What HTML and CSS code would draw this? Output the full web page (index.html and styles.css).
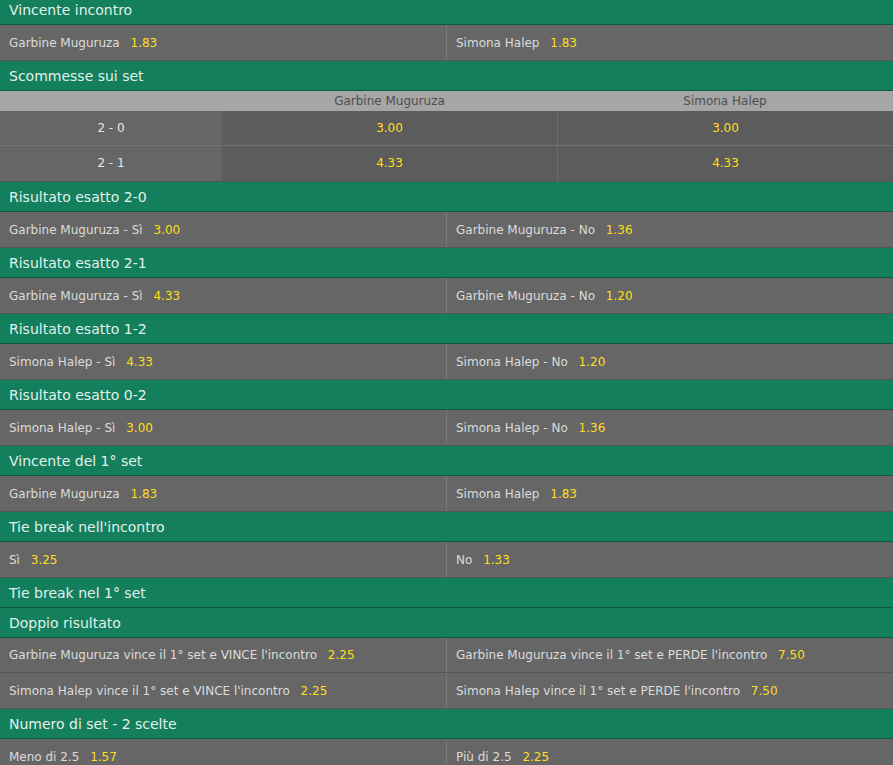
FILE: index.html
```html
<!DOCTYPE html>
<html lang="it">
<head>
<meta charset="utf-8">
<title>Scommesse</title>
<link rel="stylesheet" href="styles.css">
</head>
<body>
<div class="markets">
  <div class="mhead">Vincente incontro</div>
  <div class="row2">
    <div class="cell">Garbine Muguruza <span class="odd">1.83</span></div>
    <div class="cell">Simona Halep <span class="odd">1.83</span></div>
  </div>

  <div class="mhead">Scommesse sui set</div>
  <div class="settable">
    <div class="colhead"></div>
    <div class="colhead">Garbine Muguruza</div>
    <div class="colhead">Simona Halep</div>
    <div class="score">2 - 0</div>
    <div class="setodd"><span class="odd">3.00</span></div>
    <div class="setodd last"><span class="odd">3.00</span></div>
    <div class="score">2 - 1</div>
    <div class="setodd"><span class="odd">4.33</span></div>
    <div class="setodd last"><span class="odd">4.33</span></div>
  </div>

  <div class="mhead">Risultato esatto 2-0</div>
  <div class="row2">
    <div class="cell">Garbine Muguruza - Sì <span class="odd">3.00</span></div>
    <div class="cell">Garbine Muguruza - No <span class="odd">1.36</span></div>
  </div>

  <div class="mhead">Risultato esatto 2-1</div>
  <div class="row2">
    <div class="cell">Garbine Muguruza - Sì <span class="odd">4.33</span></div>
    <div class="cell">Garbine Muguruza - No <span class="odd">1.20</span></div>
  </div>

  <div class="mhead">Risultato esatto 1-2</div>
  <div class="row2">
    <div class="cell">Simona Halep - Sì <span class="odd">4.33</span></div>
    <div class="cell">Simona Halep - No <span class="odd">1.20</span></div>
  </div>

  <div class="mhead">Risultato esatto 0-2</div>
  <div class="row2">
    <div class="cell">Simona Halep - Sì <span class="odd">3.00</span></div>
    <div class="cell">Simona Halep - No <span class="odd">1.36</span></div>
  </div>

  <div class="mhead">Vincente del 1° set</div>
  <div class="row2">
    <div class="cell">Garbine Muguruza <span class="odd">1.83</span></div>
    <div class="cell">Simona Halep <span class="odd">1.83</span></div>
  </div>

  <div class="mhead">Tie break nell'incontro</div>
  <div class="row2">
    <div class="cell">Sì <span class="odd">3.25</span></div>
    <div class="cell">No <span class="odd">1.33</span></div>
  </div>

  <div class="mhead">Tie break nel 1° set</div>

  <div class="mhead">Doppio risultato</div>
  <div class="row2 tight">
    <div class="cell">Garbine Muguruza vince il 1° set e VINCE l'incontro <span class="odd">2.25</span></div>
    <div class="cell">Garbine Muguruza vince il 1° set e PERDE l'incontro <span class="odd">7.50</span></div>
  </div>
  <div class="row2">
    <div class="cell">Simona Halep vince il 1° set e VINCE l'incontro <span class="odd">2.25</span></div>
    <div class="cell">Simona Halep vince il 1° set e PERDE l'incontro <span class="odd">7.50</span></div>
  </div>

  <div class="mhead">Numero di set - 2 scelte</div>
  <div class="row2">
    <div class="cell">Meno di 2.5 <span class="odd">1.57</span></div>
    <div class="cell">Più di 2.5 <span class="odd">2.25</span></div>
  </div>
</div>
</body>
</html>
```

FILE: styles.css
```css
html, body {
  margin: 0;
  padding: 0;
  background: #666666;
  overflow: hidden;
}

.markets {
  margin-top: -5px;
  font-family: "DejaVu Sans", Verdana, sans-serif;
}

.mhead {
  height: 29px;
  line-height: 30px;
  background: #137f5d;
  border-bottom: 1px solid #0c5a41;
  color: #e3f0ea;
  font-size: 14px;
  padding-left: 9px;
}

.row2 {
  display: grid;
  grid-template-columns: 446px 1fr;
  background: #666666;
  border-bottom: 1px solid #555555;
}

.cell {
  height: 35px;
  line-height: 36px;
  padding-left: 9px;
  color: #dcdcdc;
  font-size: 12px;
  white-space: nowrap;
}

.row2.tight .cell {
  height: 34px;
  line-height: 35px;
}

.cell + .cell {
  border-left: 1px solid #797979;
}

.odd {
  color: #ffdf1b;
  margin-left: 7px;
}

.settable {
  display: grid;
  grid-template-columns: 222px 335px 1fr;
}

.colhead {
  height: 20px;
  line-height: 21px;
  background: #a6a6a6;
  color: #4e4e4e;
  font-size: 12px;
  text-align: center;
}

.score {
  height: 34px;
  line-height: 35px;
  background: #666666;
  border-bottom: 1px solid #727272;
  color: #e6e6e6;
  font-size: 12px;
  text-align: center;
}

.setodd {
  height: 34px;
  line-height: 35px;
  background: #5c5c5c;
  border-bottom: 1px solid #727272;
  text-align: center;
  font-size: 12px;
}

.setodd .odd {
  margin-left: 0;
}

.setodd.last {
  border-left: 1px solid #6c6c6c;
}

.settable > :nth-last-child(-n+3) {
  height: 35px;
  border-bottom-color: #555555;
}
```
